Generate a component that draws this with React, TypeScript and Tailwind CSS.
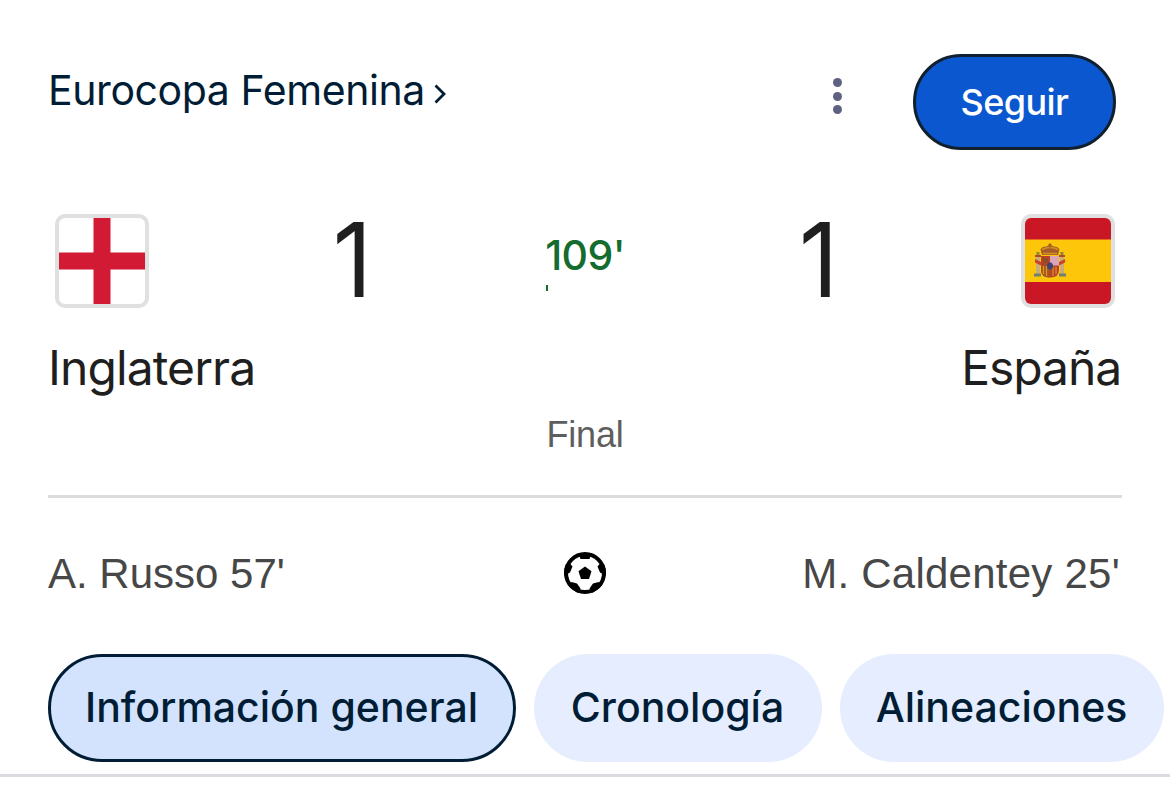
import React from "react";

const FONT = "font-['Inter','Liberation_Sans',sans-serif]";

function EnglandFlag() {
  return (
    <svg viewBox="0 0 94 94" className="block size-[94px]" aria-label="Inglaterra">
      <rect width="94" height="94" rx="10" fill="#e0e0e0" />
      <rect x="4" y="4" width="86" height="86" rx="6" fill="#fff" />
      <path d="M38.500 4h17v34.500h34.500v17h-34.500v34.500h-17v-34.500h-34.500v-17h34.500z" fill="#d21a34" />
    </svg>
  );
}

function SpainFlag() {
  return (
    <svg viewBox="0 0 94 94" className="block size-[94px]" aria-label="España">
      <defs>
        <clipPath id="es">
          <rect x="4" y="4" width="86" height="86" rx="6" />
        </clipPath>
      </defs>
      <rect width="94" height="94" rx="10" fill="#e0e0e0" />
      <g clipPath="url(#es)">
        <path d="M4 4h86v86H4z" fill="#c91725" />
        <path d="M4 25.500h86v42.500H4z" fill="#fdc60a" />
      </g>
      <path d="M15 42h4v18h-4zM39 42h4v18h-4z" fill="#c8ae75" />
      <path d="M14 41h6v2h-6zM38 41h6v2h-6z" fill="#b34a25" />
      <path d="M14 45l6 3v3.500l-6-3zM44 45l-6 3v3.500l6-3z" fill="#c9422d" />
      <path d="M13 59.500h7v3h-7zM38 59.500h7v3h-7z" fill="#72806e" />
      <path d="M15.500 38h3v3h-3zM39.500 38h3v3h-3z" fill="#8d8a3d" />
      <path d="M20 42h18v14q0 7.500-9 7.500t-9-7.500z" fill="#b9402a" />
      <path d="M29 42h9v9.500h-9z" fill="#dba5b9" />
      <path d="M20 51.500h9v12q-9 0-9-7.500z" fill="#a8541f" />
      <path d="M22 44h5v5h-5z" fill="#8f4a28" />
      <path d="M22.500 52v8M25.500 52v10M32 53v9M35 53v7" stroke="#d99a20" strokeWidth="1.200" />
      <ellipse cx="29" cy="52" rx="3" ry="3.600" fill="#3c4370" />
      <path d="M21 41l-1.500-6q2-3 6-2.500l3.500-2 3.500 2q4-.5 6 2.500l-1.500 6z" fill="#a85a2a" />
      <path d="M21 35.500q8-4 16 0M22 39.500h14" stroke="#cf9320" strokeWidth="1.500" fill="none" />
      <path d="M29 29v5M27.500 30.500h3" stroke="#9a6420" strokeWidth="1" />
    </svg>
  );
}

function Ball() {
  return (
    <svg viewBox="0 0 42 42" className="block size-[42px]">
      <defs>
        <clipPath id="ball">
          <circle cx="21" cy="21" r="21" />
        </clipPath>
      </defs>
      <circle cx="21" cy="21" r="19" fill="#fff" stroke="#000" strokeWidth="4" />
      <g clipPath="url(#ball)">
        <path d="M14.500 1h13l-2 6h-9zM0 12l6-.5 2.500 3-2.500 6L0 24zM42 12l-6-.5-2.500 3 2.500 6L42 24zM4 34l3.500-4 5.500 1.500 3.500 5L14 42zM38 34l-3.500-4-5.500 1.500-3.500 5L28 42z" />
      </g>
      <path d="M21 14.500l6.500 4.700-2.500 7.700h-8l-2.500-7.700z" />
    </svg>
  );
}

export default function App() {
  return (
    <main className={`flex h-[796px] w-[1170px] flex-col overflow-hidden bg-white whitespace-nowrap text-[#1f1f1f] ${FONT}`}>
      <header className="flex h-[150px] items-start pt-[54px] pr-[54px] pl-12 text-[#001d35]">
        <a className="flex h-[74px] items-center text-[41px]">
          <span className="tracking-[-0.42px]">Eurocopa Femenina</span>
          <svg viewBox="0 0 12 20" className="mt-[5px] ml-[9px] h-5 w-3" fill="none" stroke="currentColor" strokeWidth="2.800">
            <path d="M1.500 1.500l8.500 8.500-8.500 8.500" />
          </svg>
        </a>
        <div className="mt-6 mr-[71px] ml-auto flex flex-col gap-[4.500px]">
          <i className="size-[9px] rounded-full bg-[#5e6180]" />
          <i className="size-[9px] rounded-full bg-[#5e6180]" />
          <i className="size-[9px] rounded-full bg-[#5e6180]" />
        </div>
        <button className="flex h-24 w-[203px] items-center justify-center rounded-full border-3 border-[#10202f] bg-[#0b57d0] pb-px text-[36px] font-medium tracking-[-0.6px] text-white">
          Seguir
        </button>
      </header>

      <section className="flex h-[345px] justify-between px-12 pt-16">
        <div className="flex w-[360px] flex-col">
          <div className="flex h-[94px] items-center justify-between pl-[7px]">
            <EnglandFlag />
            <span className="mr-[36px] pb-[2px] text-[100px] leading-[92px] font-light [-webkit-text-stroke:2px_currentColor]">1</span>
          </div>
          <span className="mt-8 text-[48px] leading-[55px] tracking-[-0.9px]">Inglaterra</span>
        </div>
        <div className="flex flex-col items-center">
          <div className="flex h-[170px] flex-col pt-[21px] text-[#146c2e]">
            <span className="text-[41px] leading-[40px] font-medium tracking-[-0.6px]">109'</span>
            <i className="mt-[10px] ml-px h-[6px] w-[2px] bg-[#146c2e]" />
          </div>
          <span className="mt-[29px] font-['Liberation_Sans',sans-serif] text-[36px] leading-[44px] tracking-[-0.2px] text-[#5e5e5e]">Final</span>
        </div>
        <div className="flex w-[360px] flex-col">
          <div className="flex h-[94px] items-center justify-between pr-[7px]">
            <span className="ml-[37px] pb-[2px] text-[100px] leading-[92px] font-light [-webkit-text-stroke:2px_currentColor]">1</span>
            <SpainFlag />
          </div>
          <span className="mt-8 mr-px self-end text-[48px] leading-[55px] tracking-[-1.1px]">España</span>
        </div>
      </section>

      <section className="mx-12 grid h-[159px] grid-cols-[1fr_auto_1fr] items-center border-t-3 border-[#dadcde] pb-[6px] text-[42px] text-[#474747]">
        <span className="font-['Liberation_Sans',sans-serif]">A. Russo 57'</span>
        <Ball />
        <span className="mr-[2px] justify-self-end font-['Liberation_Sans',sans-serif] tracking-[0.25px]">M. Caldentey 25'</span>
      </section>

      <nav className="flex h-[123px] shrink-0 gap-[18px] border-b-3 border-[#dadce0] pl-12 text-[41px] font-medium text-[#001d35]">
        <button className="h-[108px] w-[468px] shrink-0 rounded-full border-3 border-[#001d35] bg-[#d3e3fd] pr-px">
          Información general
        </button>
        <button className="h-[108px] w-[288px] shrink-0 rounded-full bg-[#e5edff] pr-px">Cronología</button>
        <button className="h-[108px] w-[324px] shrink-0 rounded-full bg-[#e5edff] pr-px">Alineaciones</button>
      </nav>
    </main>
  );
}
